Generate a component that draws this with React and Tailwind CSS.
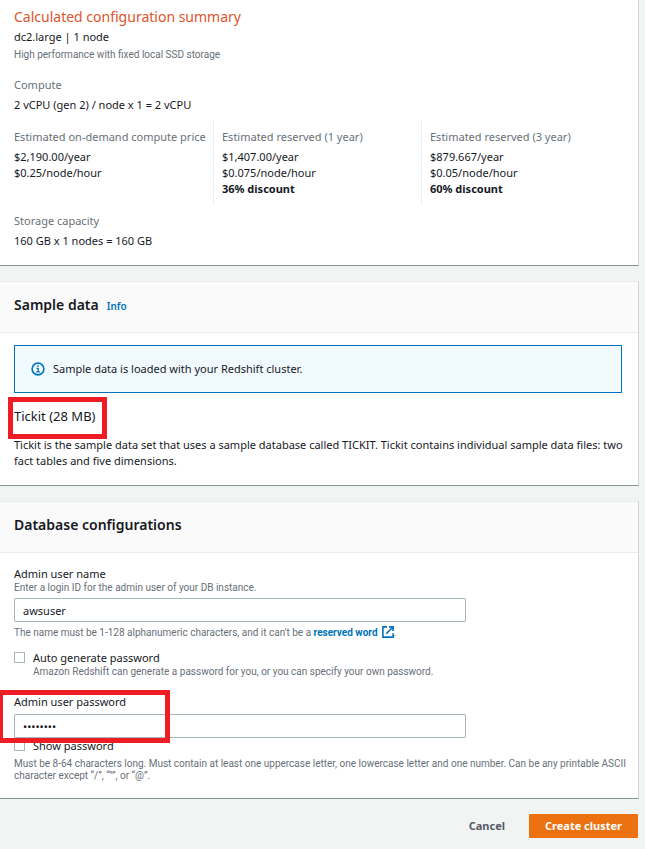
const prices = [
  {
    label: "Estimated on-demand compute price",
    lines: ["$2,190.00/year", "$0.25/node/hour"],
  },
  {
    label: "Estimated reserved (1 year)",
    lines: ["$1,407.00/year", "$0.075/node/hour"],
    discount: "36% discount",
  },
  {
    label: "Estimated reserved (3 year)",
    lines: ["$879.667/year", "$0.05/node/hour"],
    discount: "60% discount",
  },
];

function Card({ children }) {
  return (
    <section className="border-r border-b border-r-[#d0d5d5] border-b-[#879596] bg-white">
      {children}
    </section>
  );
}

function CardHeader({ title, info }) {
  return (
    <header className="flex h-[52px] items-center border-y border-[#eaeded] bg-[#fafafa] px-3.5 pb-1">
      <div className="flex items-baseline gap-2">
        <h2 className="text-sm font-semibold">{title}</h2>
        {info && (
          <a href="#info" className="text-[10px] font-semibold text-[#0073bb]">Info</a>
        )}
      </div>
    </header>
  );
}

function Hint({ children }) {
  return (
    <p className="font-[Roboto,sans-serif] text-[10px] leading-3 text-[#687078]">{children}</p>
  );
}

function Field({ label, value }) {
  return (
    <div>
      <dt className="text-[#687078]">{label}</dt>
      <dd className="mt-1">{value}</dd>
    </div>
  );
}

function TextInput(props) {
  return (
    <input
      {...props}
      className="mt-1 block h-6 w-full max-w-[452px] rounded-[1px] border border-[#aab7b8] bg-white px-2"
    />
  );
}

function Checkbox({ id, label, description }) {
  return (
    <div className="flex gap-2">
      <input
        id={id}
        type="checkbox"
        className="mt-0.5 size-[11px] shrink-0 appearance-none border border-[#aab7b8] bg-white checked:bg-[#0073bb]"
      />
      <div>
        <label htmlFor={id} className="block">{label}</label>
        {description && <Hint>{description}</Hint>}
      </div>
    </div>
  );
}

function InfoIcon() {
  return (
    <svg viewBox="0 0 14 14" className="size-3.5 shrink-0" fill="none" stroke="#0073bb" aria-hidden="true">
      <circle cx="7" cy="7" r="5.9" strokeWidth="1.6" />
      <path d="M5.5 6.3h1.7v3.4M5.3 9.8h3.5" strokeWidth="1.3" />
      <path d="M6.2 4h1.6" strokeWidth="1.5" />
    </svg>
  );
}

function ExternalIcon() {
  return (
    <svg
      viewBox="0 0 12 12"
      className="ml-1 inline size-3 align-[-2px]"
      fill="none"
      stroke="currentColor"
      strokeWidth="1.6"
      aria-hidden="true"
    >
      <path d="M5 .9H.9v10.2h10.2V7.2M7 .9h4.1V5M11 1 4.2 7.8" />
    </svg>
  );
}

export default function App() {
  return (
    <div className="min-h-screen bg-[#f2f3f3] pr-1.5 font-['Noto_Sans',sans-serif] text-[11px] leading-4 text-[#16191f]">
      <main className="flex flex-col gap-[15px]">
        <Card>
          <div className="px-3.5 pt-[7px] pb-4">
            <h2 className="text-sm leading-5 text-[#e0532a]">Calculated configuration summary</h2>
            <p className="mt-0.5 mb-1">dc2.large | 1 node</p>
            <Hint>High performance with fixed local SSD storage</Hint>
            <dl className="mt-4">
              <Field label="Compute" value="2 vCPU (gen 2) / node x 1 = 2 vCPU" />
              <div className="my-2 grid grid-cols-[191px_200px_1fr] gap-2">
                {prices.map((price) => (
                  <div key={price.label} className="border-l border-[#eaeded] py-2 pl-2 first:border-0 first:pl-0">
                    <dt className="whitespace-nowrap text-[#687078]">{price.label}</dt>
                    <dd className="mt-1">
                      {price.lines.map((line) => (
                        <p key={line}>{line}</p>
                      ))}
                      {price.discount && <p className="font-bold">{price.discount}</p>}
                    </dd>
                  </div>
                ))}
              </div>
              <Field label="Storage capacity" value="160 GB x 1 nodes = 160 GB" />
            </dl>
          </div>
        </Card>

        <Card>
          <CardHeader title="Sample data" info />
          <div className="px-3.5 pt-3 pb-4">
            <div className="mr-0.5 flex h-12 items-center gap-2 border border-[#0073bb] bg-[#f1faff] px-4">
              <InfoIcon />
              <p>Sample data is loaded with your Redshift cluster.</p>
            </div>
            <div className="relative mt-[13px] w-fit">
              <h3 className="text-[13px] leading-5">Tickit (28 MB)</h3>
              <div className="pointer-events-none absolute -top-[9px] -right-3 -bottom-[13px] -left-1.5 border-5 border-[#ee1c25]" />
            </div>
            <p className="mt-[11px]">
              Tickit is the sample data set that uses a sample database called TICKIT. Tickit contains
              individual sample data files: two fact tables and five dimensions.
            </p>
          </div>
        </Card>

        <Card>
          <CardHeader title="Database configurations" />
          <form id="database" className="pt-[13px] pr-2 pb-4 pl-3.5">
            <label htmlFor="username" className="block">Admin user name</label>
            <Hint>Enter a login ID for the admin user of your DB instance.</Hint>
            <TextInput id="username" type="text" defaultValue="awsuser" />
            <div className="mt-1 mb-[11px]">
              <Hint>
                The name must be 1-128 alphanumeric characters, and it can't be a{" "}
                <a href="#reserved" className="font-bold text-[#0073bb]">
                  reserved word
                  <ExternalIcon />
                </a>
                .
              </Hint>
            </div>

            <Checkbox
              id="auto"
              label="Auto generate password"
              description="Amazon Redshift can generate a password for you, or you can specify your own password."
            />

            <div className="relative mt-4">
              <label htmlFor="password" className="block">Admin user password</label>
              <TextInput id="password" type="password" defaultValue="password" />
              <div className="pointer-events-none absolute -top-1 -bottom-[5px] -left-3.5 w-[170px] border-5 border-l-3 border-[#ee1c25]" />
            </div>
            <Checkbox id="show" label="Show password" />
            <div className="mt-1">
              <Hint>
                Must be 8-64 characters long. Must contain at least one uppercase letter, one lowercase
                letter and one number. Can be any printable ASCII character except “/”, “"”, or “@”.
              </Hint>
            </div>
          </form>
        </Card>
      </main>

      <footer className="flex justify-end gap-2 pt-[15px] pr-px pb-2.5 font-bold">
        <button type="button" className="h-6 px-4 text-[#545b64]">Cancel</button>
        <button type="submit" form="database" className="h-6 rounded-[1px] bg-[#ec7211] px-4 text-white">
          Create cluster
        </button>
      </footer>
    </div>
  );
}
